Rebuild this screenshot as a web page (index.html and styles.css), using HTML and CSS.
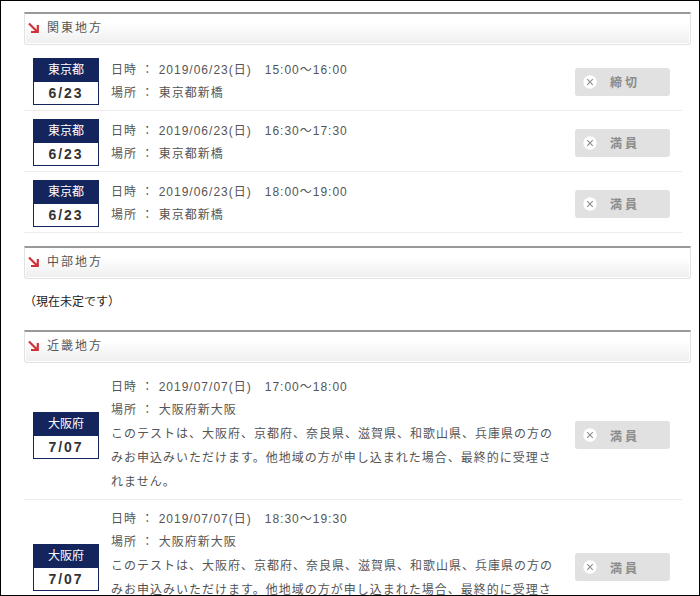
FILE: index.html
```html
<!DOCTYPE html>
<html lang="ja">
<head>
<meta charset="utf-8">
<title>開催日程</title>
<link rel="stylesheet" href="styles.css">
</head>
<body>
<svg class="defs" aria-hidden="true">
  <symbol id="arrow" viewBox="0 0 12 12"><path d="M1 1.5 9 9.5M9.8 3V10H3" fill="none" stroke="#cf3238" stroke-width="2.2"/></symbol>
  <symbol id="cross" viewBox="0 0 14 14"><circle cx="7" cy="7" r="6.7" fill="#fff"/><path d="M4.2 4.2l5.6 5.6M9.8 4.2l-5.6 5.6" stroke="#8c8c8c" stroke-width="1.1"/></symbol>
</svg>
<main class="schedule">
  <section class="region">
    <h2 class="region-title"><svg class="arrow"><use href="#arrow"/></svg>関東地方</h2>
    <ul class="events">
      <li class="event">
        <div class="badge"><span class="place">東京都</span><span class="date">6/23</span></div>
        <div class="detail"><p>日時 ： 2019/06/23(日)　15:00～16:00</p><p>場所 ： 東京都新橋</p></div>
        <button class="status" type="button" disabled><svg class="cross"><use href="#cross"/></svg>締切</button>
      </li>
      <li class="event">
        <div class="badge"><span class="place">東京都</span><span class="date">6/23</span></div>
        <div class="detail"><p>日時 ： 2019/06/23(日)　16:30～17:30</p><p>場所 ： 東京都新橋</p></div>
        <button class="status" type="button" disabled><svg class="cross"><use href="#cross"/></svg>満員</button>
      </li>
      <li class="event">
        <div class="badge"><span class="place">東京都</span><span class="date">6/23</span></div>
        <div class="detail"><p>日時 ： 2019/06/23(日)　18:00～19:00</p><p>場所 ： 東京都新橋</p></div>
        <button class="status" type="button" disabled><svg class="cross"><use href="#cross"/></svg>満員</button>
      </li>
    </ul>
  </section>
  <section class="region">
    <h2 class="region-title"><svg class="arrow"><use href="#arrow"/></svg>中部地方</h2>
    <p class="note">（現在未定です）</p>
  </section>
  <section class="region">
    <h2 class="region-title"><svg class="arrow"><use href="#arrow"/></svg>近畿地方</h2>
    <ul class="events">
      <li class="event">
        <div class="badge"><span class="place">大阪府</span><span class="date">7/07</span></div>
        <div class="detail"><p>日時 ： 2019/07/07(日)　17:00～18:00</p><p>場所 ： 大阪府新大阪</p><p class="remark">このテストは、大阪府、京都府、奈良県、滋賀県、和歌山県、兵庫県の方のみお申込みいただけます。他地域の方が申し込まれた場合、最終的に受理されません。</p></div>
        <button class="status" type="button" disabled><svg class="cross"><use href="#cross"/></svg>満員</button>
      </li>
      <li class="event">
        <div class="badge"><span class="place">大阪府</span><span class="date">7/07</span></div>
        <div class="detail"><p>日時 ： 2019/07/07(日)　18:30～19:30</p><p>場所 ： 大阪府新大阪</p><p class="remark">このテストは、大阪府、京都府、奈良県、滋賀県、和歌山県、兵庫県の方のみお申込みいただけます。他地域の方が申し込まれた場合、最終的に受理されません。</p></div>
        <button class="status" type="button" disabled><svg class="cross"><use href="#cross"/></svg>満員</button>
      </li>
    </ul>
  </section>
</main>
</body>
</html>
```
FILE: styles.css
```css
* { box-sizing: border-box; }
body, h2, p, ul { margin: 0; padding: 0; }
body {
  background: #fff;
  color: #555;
  font: 12px/23px "Liberation Sans", "Noto Sans CJK JP", sans-serif;
}
.defs { position: absolute; width: 0; height: 0; }
.schedule {
  height: 100vh;
  overflow: hidden;
  border: 1px solid #000;
  padding: 11px 8px 0 23px;
}
.region { margin-bottom: 13px; }
.region-title {
  display: flex;
  align-items: center;
  gap: 7px;
  height: 33px;
  padding: 0 3px 2px;
  border: 1px solid #e2e2e2;
  border-top: 2px solid #999;
  border-radius: 0 0 3px 3px;
  background: linear-gradient(#fff 30%, #eee);
  box-shadow: inset 0 0 0 1px #fff;
  font-size: 12px;
  font-weight: 400;
  letter-spacing: 2px;
}
.arrow { width: 12px; height: 12px; }
.events { list-style: none; margin: 5px 9px 0 0; }
.event {
  display: flex;
  align-items: center;
  gap: 12px;
  padding: 8px 12px 5px 9px;
  border-bottom: 1px solid #ececec;
}
.badge {
  flex: none;
  width: 66px;
  border: 1px solid #14245c;
  text-align: center;
}
.badge span { display: block; }
.place { background: #14245c; color: #fff; }
.date {
  color: #333;
  font-size: 14px;
  font-weight: 700;
  line-height: 22px;
  letter-spacing: 2px;
}
.detail { flex: 1; letter-spacing: 1px; }
.remark { line-height: 24px; }
.status {
  display: flex;
  flex: none;
  align-items: center;
  gap: 13px;
  width: 95px;
  height: 28px;
  padding: 0 8px;
  border: 0;
  border-radius: 3px;
  background: #e1e1e1;
  color: #8c8c8c;
  font: 700 12px/23px "Noto Sans CJK JP", sans-serif;
  letter-spacing: 3px;
}
.cross { width: 14px; height: 14px; }
.note { padding: 12px 0 3px; color: #222; }
```
